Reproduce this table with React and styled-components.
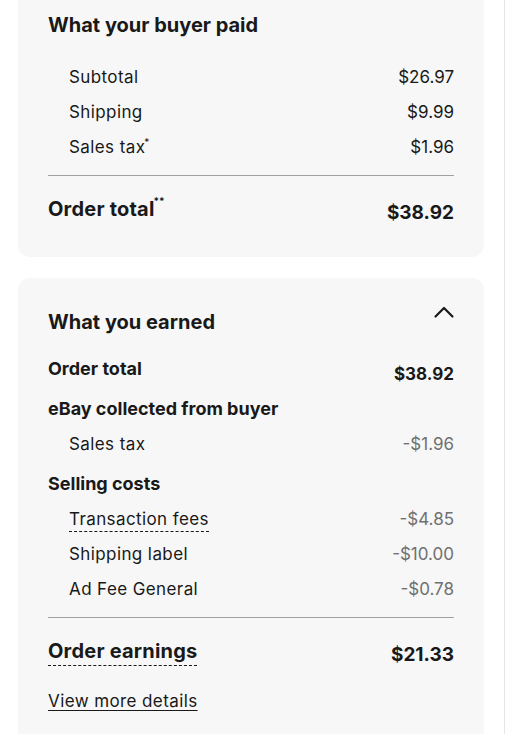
import React from "react";
import styled, { createGlobalStyle } from "styled-components";

const Global = createGlobalStyle`
  html, body { margin: 0; padding: 0; background: #ffffff; }
  body { font-family: "Inter", "Open Sans", sans-serif; color: #191919; }
`;

const Page = styled.div`
  display: flex;
  width: 514px;
  height: 734px;
  overflow: hidden;
`;

const Column = styled.div`
  width: 466px;
  padding-left: 18px;
  display: flex;
  flex-direction: column;
  gap: 21px;
  flex-shrink: 0;
`;

const Rail = styled.div`
  width: 1px;
  margin-left: 20px;
  background: #e5e5e5;
  align-self: stretch;
`;

const Card = styled.section`
  background: #f7f7f7;
  border-radius: ${(p) => (p.$cut ? "0 0 12px 12px" : "12px")};
  padding: ${(p) => (p.$cut ? "12px 30px 31px" : "31px 30px 48px")};
`;

const HeadRow = styled.div`
  display: flex;
  justify-content: space-between;
  align-items: flex-start;
  margin-bottom: ${(p) => p.$mb || 0}px;
`;

const Title = styled.h2`
  margin: 0;
  font-size: 20px;
  line-height: 26px;
  font-weight: 700;
`;

const Chevron = styled.svg`
  width: 24px;
  height: 24px;
  margin-right: -2px;
  margin-top: -9px;
`;

const Row = styled.div`
  display: flex;
  justify-content: space-between;
  align-items: flex-start;
  height: 35px;
  margin-top: ${(p) => p.$gap || 0}px;
  padding-left: ${(p) => (p.$indent ? 21 : 0)}px;
  font-size: 17px;
  font-weight: ${(p) => (p.$bold ? 700 : 400)};
  line-height: 20px;
`;

const Label = styled.span`
  font-size: ${(p) => (p.$big ? 18 : 17)}px;
  letter-spacing: ${(p) => (p.$plain ? 0.4 : 0)}px;
  ${(p) => p.$dashed && "border-bottom: 1px dashed #191919; padding-bottom: 2px;"}
`;

const TotalLabel = styled.span`
  letter-spacing: 0.2px;
  ${(p) => p.$dashed && "border-bottom: 1px dashed #191919; padding-bottom: 1px;"}
`;

const Sup = styled.sup`
  font-size: 10px;
  vertical-align: top;
  line-height: 10px;
  letter-spacing: 0;
  margin-left: -1px;
`;

const Value = styled.span`
  color: ${(p) => (p.$muted ? "#707070" : "#191919")};
  margin-top: ${(p) => p.$drop || 0}px;
`;

const Divider = styled.hr`
  border: 0;
  border-top: 1px solid #a0a0a0;
  margin: ${(p) => p.$m};
`;

const TotalRow = styled.div`
  display: flex;
  justify-content: space-between;
  align-items: flex-start;
  font-size: 20px;
  font-weight: 700;
  line-height: 26px;
`;

const TotalValue = styled.span`
  font-size: 19px;
  margin-top: 4px;
`;

const Link = styled.a`
  display: inline-block;
  margin-top: 23px;
  font-size: 17px;
  letter-spacing: 0.4px;
  color: #191919;
  text-decoration: underline;
  text-underline-offset: 3px;
`;

export default function App() {
  return (
    <>
      <Global />
      <Page>
        <Column>
          <Card $cut>
            <HeadRow $mb={29}>
              <Title>What your buyer paid</Title>
            </HeadRow>
            <Row $indent>
              <Label $plain>Subtotal</Label>
              <Value>$26.97</Value>
            </Row>
            <Row $indent>
              <Label $plain>Shipping</Label>
              <Value>$9.99</Value>
            </Row>
            <Row $indent>
              <Label $plain>
                Sales tax<Sup>*</Sup>
              </Label>
              <Value>$1.96</Value>
            </Row>
            <Divider $m="3px 0 20px" />
            <TotalRow>
              <TotalLabel>
                Order total<Sup>**</Sup>
              </TotalLabel>
              <TotalValue>$38.92</TotalValue>
            </TotalRow>
          </Card>
          <Card>
            <HeadRow $mb={24}>
              <Title>What you earned</Title>
              <Chevron viewBox="0 0 24 24" fill="none">
                <path d="M3.5 16.5 12 8 20.5 16.5" stroke="#191919" strokeWidth="2.2" strokeLinecap="round" strokeLinejoin="round" />
              </Chevron>
            </HeadRow>
            <Row $bold>
              <Label $big>Order total</Label>
              <Value $drop={5}>$38.92</Value>
            </Row>
            <Row $bold $gap={5}>
              <Label $big>eBay collected from buyer</Label>
            </Row>
            <Row $indent>
              <Label $plain>Sales tax</Label>
              <Value $muted>-$1.96</Value>
            </Row>
            <Row $bold $gap={5}>
              <Label $big>Selling costs</Label>
            </Row>
            <Row $indent>
              <Label $plain $dashed>Transaction fees</Label>
              <Value $muted>-$4.85</Value>
            </Row>
            <Row $indent>
              <Label $plain>Shipping label</Label>
              <Value $muted>-$10.00</Value>
            </Row>
            <Row $indent>
              <Label $plain>Ad Fee General</Label>
              <Value $muted>-$0.78</Value>
            </Row>
            <Divider $m="3px 0 20px" />
            <TotalRow>
              <TotalLabel $dashed>Order earnings</TotalLabel>
              <TotalValue>$21.33</TotalValue>
            </TotalRow>
            <Link href="#">View more details</Link>
          </Card>
        </Column>
        <Rail />
      </Page>
    </>
  );
}
